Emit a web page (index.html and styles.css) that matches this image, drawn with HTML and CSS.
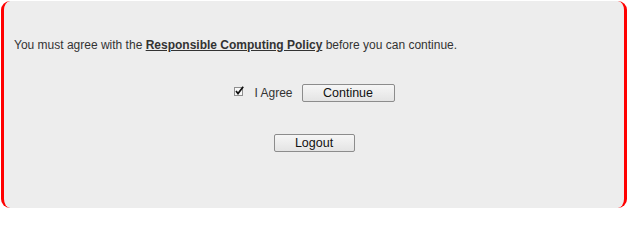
FILE: index.html
```html
<!DOCTYPE html>
<html>
<head>
<meta charset="utf-8">
<link rel="stylesheet" href="styles.css">
</head>
<body>
<div class="box">
  <p class="notice">You must agree with the <a class="policy" href="#">Responsible Computing Policy</a> before you can continue.</p>
  <div class="agree-row">
    <span class="check"><svg width="12" height="11" viewBox="0 0 12 11"><rect x="0.5" y="1.5" width="8" height="8" fill="#f7f7f7" stroke="#8f8f8f"/><path d="M2 5 L4 7.6 L9.2 0.8" fill="none" stroke="#111" stroke-width="1.7"/></svg></span>
    <label class="agree-label">I Agree</label>
    <button class="btn btn-continue">Continue</button>
  </div>
  <div class="logout-row">
    <button class="btn btn-logout">Logout</button>
  </div>
</div>
</body>
</html>
```

FILE: styles.css
```css
html, body {
  margin: 0;
  padding: 0;
  background: #ffffff;
}
body {
  font-family: "Liberation Sans", Arial, sans-serif;
  color: #333333;
}
.box {
  margin: 1px 2px 0 1px;
  height: 207px;
  box-sizing: border-box;
  background: #ededed;
  border-left: 3px solid #ff0000;
  border-right: 3px solid #ff0000;
  border-radius: 9px;
  padding: 37px 10px 0 10px;
}
.notice {
  margin: 0;
  font-size: 12px;
  line-height: 14px;
}
.policy {
  color: #333333;
  font-weight: bold;
  text-decoration: underline;
}
.agree-row {
  margin-top: 32px;
  display: flex;
  justify-content: center;
  align-items: center;
  padding-left: 1px;
}
.check {
  display: flex;
  width: 12px;
  height: 11px;
  margin-right: 8px;
  margin-top: -3px;
}
.agree-label {
  font-size: 12px;
  line-height: 14px;
  margin-right: 9px;
}
.btn {
  font-family: "Liberation Sans", Arial, sans-serif;
  font-size: 12.5px;
  color: #111111;
  height: 18px;
  padding: 0;
  border: 1px solid #8c8c8c;
  border-radius: 2px;
  background: linear-gradient(#f6f6f6, #e4e4e4);
  line-height: 16px;
}
.btn-continue {
  width: 93px;
}
.logout-row {
  margin-top: 32px;
  display: flex;
  justify-content: center;
}
.btn-logout {
  width: 81px;
}
```
